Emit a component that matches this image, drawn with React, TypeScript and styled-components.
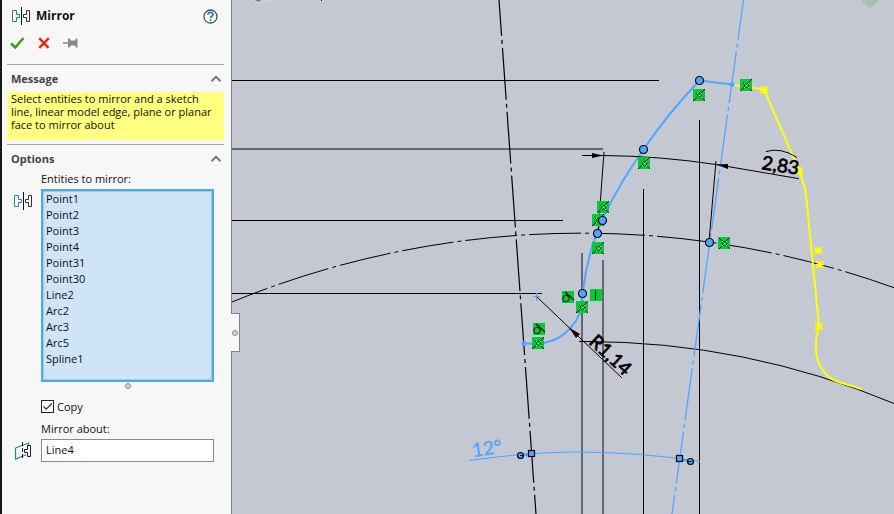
import React from "react";
import styled, { createGlobalStyle } from "styled-components";

const GlobalStyle = createGlobalStyle`
  *, *::before, *::after { box-sizing: border-box; }
  body { margin: 0; background: #c4c8d3; }
  body, button, input, select {
    font-family: "Open Sans", "Noto Sans", sans-serif;
    font-size: 12px;
    color: #111;
  }
`;

const Page = styled.div`
  display: flex;
  min-height: 100vh;
`;

const Panel = styled.aside`
  position: relative;
  flex: none;
  width: 232px;
  padding: 4px 7px 0 5px;
  background: #f7f7f7;
  border-left: 2px solid #17181b;
  border-right: 1px solid #848484;
`;

const TitleRow = styled.header`
  display: flex;
  align-items: center;
  height: 24px;
  padding: 0 6px 0 5px;
  gap: 6px;
`;

const Title = styled.h1`
  flex: 1;
  margin: 0;
  font-size: 12px;
  line-height: 16px;
  font-weight: 700;
`;

const IconButton = styled.button`
  display: flex;
  padding: 0;
  border: 0;
  background: none;
`;

const Actions = styled.div`
  display: flex;
  align-items: center;
  gap: 13px;
  height: 36px;
  padding: 0 3px 6px;
`;

const Section = styled.section`
  border-top: 1px solid #a5a5a5;
`;

const SectionHeader = styled.button`
  display: flex;
  align-items: center;
  justify-content: space-between;
  width: 100%;
  height: 27px;
  padding: 0 2px 0 4px;
  border: 0;
  background: none;
  font-size: 11px;
  font-weight: 700;
  color: #444;
`;

const Message = styled.p`
  margin: 0 0 4px;
  padding: 0 4px 9px;
  background: #ffff80;
  font-size: 11px;
  line-height: 13px;
`;

const Fields = styled.div`
  display: grid;
  grid-template-columns: 34px 1fr;
  padding-right: 10px;
`;

const Label = styled.label`
  grid-column: 2;
  padding-bottom: 3px;
  font-size: 11px;
  line-height: 14px;
`;

const FieldIcon = styled.div`
  display: flex;
  padding: 3px 0 0 7px;
`;

const EntityList = styled.select`
  display: block;
  width: 100%;
  height: 193px;
  padding: 0;
  overflow: hidden;
  appearance: none;
  background: #cfe4f7;
  border: 2px solid #4eabe2;
  border-radius: 0;
  box-shadow: inset 0 0 0 1px #9ccbef;
  outline: 0;
`;

const Entity = styled.option`
  padding: 0 3px;
  min-height: 16px;
  font-size: 11px;
  line-height: 16px;
  color: #111;
`;

const Grip = styled.span`
  grid-column: 2;
  justify-self: center;
  width: 6px;
  height: 6px;
  margin: 1px 0 8px;
  border: 1px solid #8c8c8c;
  border-radius: 50%;
  background: #d4d4d4;
`;

const CheckRow = styled.label`
  grid-column: 2;
  display: flex;
  align-items: center;
  gap: 3px;
  height: 18px;
  margin-bottom: 7px;
  font-size: 11px;
`;

const CheckBox = styled.span`
  display: grid;
  width: 13px;
  height: 13px;
  > * { grid-area: 1 / 1; }
`;

const CheckInput = styled.input`
  appearance: none;
  width: 13px;
  height: 13px;
  margin: 0;
  border: 1px solid #222;
  background: #fff;
  & + svg { visibility: hidden; }
  &:checked + svg { visibility: visible; }
`;

const TextBox = styled.input`
  width: 100%;
  height: 23px;
  padding: 0 4px 3px;
  border: 1px solid #838a9c;
  border-radius: 0;
  background: #fff;
  font-size: 11px;
`;

const FlyoutTab = styled.button`
  position: absolute;
  top: 313px;
  right: -9px;
  display: grid;
  place-items: center;
  width: 9px;
  height: 39px;
  padding: 0;
  border: 1px solid #848484;
  border-left: 0;
  background: #f7f7f7;
`;

const TabDot = styled.span`
  width: 6px;
  height: 6px;
  border: 1px solid #8c8c8c;
  border-radius: 50%;
  background: #d4d4d4;
`;

const Viewport = styled.main`
  flex: 1;
  min-width: 0;
  overflow: hidden;
  background: #c4c8d3;
`;

const Drawing = styled.svg`
  display: block;
  width: 100%;
  height: auto;
`;

const DimensionText = styled.text`
  font-family: Lato, sans-serif;
  font-size: 19px;
`;

const entities = ["Point1", "Point2", "Point3", "Point4", "Point31", "Point30", "Line2", "Arc2", "Arc3", "Arc5", "Spline1"];

const BLUE = "#4da6ff";

const MirrorIcon = () => (
  <svg width="18" height="18" viewBox="0 0 18 18" fill="none" aria-hidden="true">
    <path d="M.5 3.5H4.5V7.5H7.5V10.5H4.5V14.5H.5Z" stroke="#2b7f9f" />
    <path d="M9.5 0V18" stroke="#111" />
    <path d="M17.5 3.5H14.5V7.5H11.500V10.5H14.5V14.5H17.5Z" stroke="#333" />
  </svg>
);

const PlaneIcon = () => (
  <svg width="18" height="18" viewBox="0 0 18 18" fill="none" aria-hidden="true">
    <path d="M1.5 6V17L12 12.800M1.5 6L14.500 1V4" stroke="#2b7f9f" strokeWidth="1.2" />
    <path d="M8.5 0V18" stroke="#222" strokeDasharray="4 2" />
    <path d="M16.5 3.5H13.5V7.5H10.500V10.5H13.5V14.5H16.5Z" stroke="#222" />
  </svg>
);

const Chevron = () => (
  <svg width="12" height="8" viewBox="0 0 12 8" fill="none" aria-hidden="true">
    <path d="M1.5 6.2L6 1.8L10.5 6.2" stroke="#777" strokeWidth="2" />
  </svg>
);

type Spot = { x: number; y: number };

const Coincident = ({ x, y, full }: Spot & { full?: boolean }) => (
  <g transform={`translate(${x} ${y})`}>
    <rect width="12" height="12" fill="#00cc33" />
    <path d={full ? "M1 1L5 5M11 1L7 5M1 12L5 8M12 12L8 8" : "M12 0L7.500 4.500M0 12L4.500 8M12 12L8 8M3 4L5 5.500"} stroke="#000" />
    <rect x="4.500" y="4.500" width="4" height="4" stroke="#1d3a24" strokeWidth=".8" />
    <path d="M4 4h1v1h-1zM8 4h1v1h-1zM4 8h1v1h-1zM8 8h1v1h-1zM6 6h1v1h-1z" fill="#f4c8e4" />
  </g>
);

const Tangent = ({ x, y }: Spot) => (
  <g transform={`translate(${x} ${y})`} fill="none" stroke="#000">
    <rect width="12" height="12" fill="#00cc33" stroke="none" />
    <circle cx="4" cy="7.500" r="3.200" />
    <path d="M3 1L12 9" strokeWidth="1.200" />
  </g>
);

const Star = ({ x, y }: Spot) => (
  <path
    transform={`translate(${x} ${y})`}
    d="M-4 0H4M0 -4V4M-4 -3.5L4 3.5M4 -3.5L-4 3.5"
    stroke="#ffff00"
    strokeWidth="1.5"
  />
);

const handles: Spot[] = [
  { x: 699.5, y: 80.5 }, { x: 643.5, y: 149.5 }, { x: 602.5, y: 220.5 },
  { x: 597.5, y: 233.5 }, { x: 582.5, y: 293.5 }, { x: 709.5, y: 242.5 },
];
const coincidents: Spot[] = [
  { x: 693, y: 89 }, { x: 638, y: 157 }, { x: 740, y: 79 }, { x: 597, y: 201 },
  { x: 592, y: 214 }, { x: 592, y: 242 }, { x: 576, y: 301 }, { x: 532, y: 337 },
];
const stars: Spot[] = [
  { x: 764, y: 90 }, { x: 799, y: 170.5 }, { x: 818, y: 250.5 }, { x: 820, y: 264.5 }, { x: 819, y: 326.5 },
];

const Sketch = () => (
  <Drawing viewBox="232 0 662 514" fill="none" role="img" aria-label="Gear tooth sketch">
    <path d="M254 0a4 2 0 0 0 8 0z" fill="#17331b" stroke="#e9ebe9" />
    <path d="M264 0a4 2 0 0 0 7 0z" fill="#a97817" stroke="#ddd" />
    <path d="M321.5 0V1" stroke="#000" />
    <path d="M861 0L870 8.5L879 0Z" fill="#a8c0b0" />

    <g stroke="#000">
      <path d="M232 80.5H659M232 220.5H563M232 293.5H542M643.5 189V514M699.5 120V514" />
      <path d="M232 149H603M582 253V514M603 260V514" stroke="#444a52" strokeWidth="1.5" />
      <path d="M499 0L536 514" strokeWidth="1.2" strokeDasharray="52 4 4 4" strokeDashoffset="16" />
      <path d="M232 302A922 922 0 0 1 894 287.7" strokeDasharray="52 4 4 4" strokeDashoffset="14" />
      <path d="M579 341.5H585A801 801 0 0 1 894 403.5" />
    </g>

    <path d="M743.5 0L672 514" stroke={BLUE} strokeWidth="1.3" strokeDasharray="52 4 4 4" strokeDashoffset="12" />

    <path d="M733 85L764 89.5L799 170L805.5 190L819 326C810 358 822 376 838 382L862 389" stroke="#ffff00" strokeWidth="2" />

    <g stroke={BLUE} strokeWidth="2">
      <path d="M524 343.5H536A47 47 0 0 0 582.5 293.5C586 265 593 240 602 220C613 197 628 171 643.5 149.5C662 122 680 101 699.5 80.5L732 84.5" />
      <path d="M533 296.5H540M536.5 293V301" strokeWidth="1" />
    </g>
    <circle cx="524" cy="343.5" r="2.5" fill={BLUE} />
    <circle cx="732" cy="84.5" r="2.5" fill={BLUE} />

    <g stroke="#000">
      <path d="M582 155.5H603Q660 156 716 164.5L799 178.7" />
      <path d="M604 152L598 233M716 161L709 242M537 297L622 378" />
      <path d="M766 151.5Q781 147 797 157.5" />
    </g>
    <path d="M603 155.5L592 153V158ZM716 164.5L728 164V169ZM569 327.5L580 334L576 338Z" fill="#000" />

    {stars.map((s) => <Star key={`${s.x}-${s.y}`} {...s} />)}
    {coincidents.map((s) => <Coincident key={`${s.x}-${s.y}`} {...s} />)}
    <Coincident x={718} y={237} full />
    <Tangent x={562} y={291} />
    <Tangent x={533} y={323} />
    <rect x="590" y="289" width="12" height="12" fill="#00cc33" />
    <path d="M595.5 290V300" stroke="#000" />

    {handles.map((s) => (
      <circle key={`${s.x}-${s.y}`} cx={s.x} cy={s.y} r="4" fill={BLUE} stroke="#000" strokeWidth="1.2" />
    ))}

    <path d="M469 460.5Q530 452 575 452Q640 452 700 461.5" stroke={BLUE} />
    <path d="M521 455.5L531 454M680 459L690 461.5" stroke={BLUE} strokeWidth="2.5" />
    <g fill={BLUE} stroke="#000" strokeWidth="1.2">
      <circle cx="520.5" cy="455.5" r="3" />
      <circle cx="690.5" cy="461.5" r="3" />
      <path d="M520 455.5H524M688 461.5H692" />
      <rect x="528.5" y="450.5" width="6" height="6" />
      <rect x="676.5" y="455.5" width="6" height="6" />
    </g>

    <DimensionText transform="translate(761 169) rotate(9)" fill="#000" stroke="#000" strokeWidth=".7">2,83</DimensionText>
    <DimensionText transform="translate(588 343) rotate(43)" fill="#000" stroke="#000" strokeWidth=".7">R1,14</DimensionText>
    <DimensionText transform="translate(473 457) rotate(-8)" fill={BLUE} stroke={BLUE} strokeWidth=".4">12°</DimensionText>
  </Drawing>
);

export default function App() {
  return (
    <>
      <GlobalStyle />
      <Page>
        <Panel>
          <TitleRow>
            <MirrorIcon />
            <Title>Mirror</Title>
            <IconButton aria-label="Help">
              <svg width="15" height="15" viewBox="0 0 15 15" fill="none">
                <circle cx="7.5" cy="7.5" r="6.5" fill="#fff" stroke="#4b4f54" strokeWidth="1.3" />
                <path d="M5 5.8C5 2.7 10 2.7 10 5.6C10 7.3 7.5 7.2 7.5 9.3" stroke="#2380ad" strokeWidth="1.8" />
                <path d="M6.6 10.3H8.4V12H6.6Z" fill="#2380ad" />
              </svg>
            </IconButton>
          </TitleRow>
          <Actions>
            <IconButton aria-label="OK">
              <svg width="15" height="14" viewBox="0 0 15 14" fill="none">
                <path d="M1 7.5L5.3 11.5L13.5 2" stroke="#38a00c" strokeWidth="2.6" />
              </svg>
            </IconButton>
            <IconButton aria-label="Cancel">
              <svg width="12" height="12" viewBox="0 0 12 12" fill="none">
                <path d="M1.2 1.2L10.5 10.8M10.8 1.2L1.2 10.8" stroke="#e02a0a" strokeWidth="2.4" />
              </svg>
            </IconButton>
            <IconButton aria-label="Keep visible">
              <svg width="15" height="12" viewBox="0 0 15 12" fill="#888">
                <path d="M0 5.2H5V1.5H6.5L8 3.5H12L13 1.5H14.5V10.5H13L12 8.5H8L6.5 10.5H5V6.8H0Z" />
              </svg>
            </IconButton>
          </Actions>
          <Section>
            <SectionHeader aria-expanded="true">Message<Chevron /></SectionHeader>
            <Message>Select entities to mirror and a sketch line, linear model edge, plane or planar face to mirror about</Message>
          </Section>
          <Section>
            <SectionHeader aria-expanded="true">Options<Chevron /></SectionHeader>
            <Fields>
              <Label htmlFor="entities">Entities to mirror:</Label>
              <FieldIcon><MirrorIcon /></FieldIcon>
              <EntityList id="entities" multiple size={11}>
                {entities.map((name) => <Entity key={name}>{name}</Entity>)}
              </EntityList>
              <Grip />
              <CheckRow>
                <CheckBox>
                  <CheckInput type="checkbox" defaultChecked />
                  <svg width="13" height="13" viewBox="0 0 13 13" fill="none" aria-hidden="true" pointerEvents="none">
                    <path d="M2.5 6.5L5.2 9.2L10.8 3.5" stroke="#333" strokeWidth="1.3" />
                  </svg>
                </CheckBox>
                Copy
              </CheckRow>
              <Label htmlFor="about">Mirror about:</Label>
              <FieldIcon><PlaneIcon /></FieldIcon>
              <TextBox id="about" type="text" defaultValue="Line4" />
            </Fields>
          </Section>
          <FlyoutTab aria-label="Collapse panel"><TabDot /></FlyoutTab>
        </Panel>
        <Viewport><Sketch /></Viewport>
      </Page>
    </>
  );
}
